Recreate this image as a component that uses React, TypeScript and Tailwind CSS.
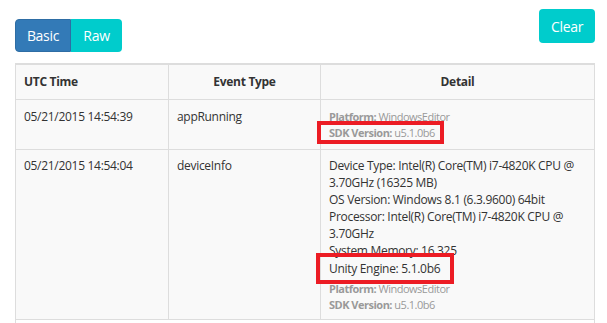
import React from "react";

const font = { fontFamily: '"Open Sans", "Noto Sans", sans-serif' };

function Meta({ boxed }: { boxed?: boolean }) {
  return (
    <div className="mt-1 text-[11px] leading-4 tracking-[-0.5px] text-[#999]">
      <div>
        <span className="font-bold">Platform:</span> WindowsEditor
      </div>
      <div>
        <span className="relative">
          <span className="font-bold">SDK Version:</span> u5.1.0b6
          {boxed && (
            <span className="absolute -left-[12px] -right-[9px] -top-[4px] -bottom-[4px] border-4 border-[#ec1c24]" />
          )}
        </span>
      </div>
    </div>
  );
}

export default function App() {
  return (
    <div className="min-h-screen bg-white text-[#333]" style={font}>
      <div className="px-[15px] pt-[9px] pr-[12px]">
        <div className="flex items-start justify-between">
          <div className="mt-[10px] flex">
            <button className="h-[33px] w-[56px] rounded-l-[4px] border border-[#2e6da4] bg-[#337ab7] text-[14px] tracking-[-0.3px] text-white">
              Basic
            </button>
            <button className="h-[33px] w-[51px] rounded-r-[4px] bg-[#00cccc] text-[14px] tracking-[-0.3px] text-white">
              Raw
            </button>
          </div>
          <button className="h-[34px] w-[56px] rounded-[4px] bg-[#00cccc] text-[14px] tracking-[-0.3px] text-white">
            Clear
          </button>
        </div>

        <table className="mt-[11px] w-[580px] table-fixed border-collapse border border-[#ddd] text-[12px] leading-[17px] tracking-[-0.3px]">
          <colgroup>
            <col className="w-[153px]" />
            <col className="w-[152px]" />
            <col />
          </colgroup>
          <thead>
            <tr className="bg-[#f9f9f9]">
              <th className="h-[35px] border border-t-2 border-[#ddd] px-2 text-left font-bold">UTC Time</th>
              <th className="border border-t-2 border-[#ddd] px-2 text-center font-bold">Event Type</th>
              <th className="border border-t-2 border-[#ddd] px-2 text-center font-bold">Detail</th>
            </tr>
          </thead>
          <tbody>
            <tr className="bg-[#f9f9f9] align-top">
              <td className="h-[50px] border border-[#ddd] px-2 pt-2">05/21/2015 14:54:39</td>
              <td className="border border-[#ddd] px-2 pt-2">appRunning</td>
              <td className="border border-[#ddd] px-2 pt-[5px]">
                <Meta boxed />
              </td>
            </tr>
            <tr className="bg-[#f9f9f9] align-top">
              <td className="border border-[#ddd] px-2 pt-[7px]">05/21/2015 14:54:04</td>
              <td className="border border-[#ddd] px-2 pt-[7px]">deviceInfo</td>
              <td className="border border-[#ddd] px-2 pb-[6px] pt-[7px]">
                <div>Device Type: Intel(R) Core(TM) i7-4820K CPU @ 3.70GHz (16325 MB)</div>
                <div>OS Version: Windows 8.1 (6.3.9600) 64bit</div>
                <div>Processor: Intel(R) Core(TM) i7-4820K CPU @ 3.70GHz</div>
                <div>System Memory: 16,325</div>
                <div className="mt-[1px]">
                  <span className="relative">
                    Unity Engine: 5.1.0b6
                    <span className="absolute -left-[13px] -right-[14px] -top-[7px] -bottom-[7px] border-4 border-[#ec1c24]" />
                  </span>
                </div>
                <Meta />
              </td>
            </tr>
            <tr>
              <td className="h-[20px] border-l border-[#ddd]" />
              <td />
              <td />
            </tr>
          </tbody>
        </table>
      </div>
    </div>
  );
}
